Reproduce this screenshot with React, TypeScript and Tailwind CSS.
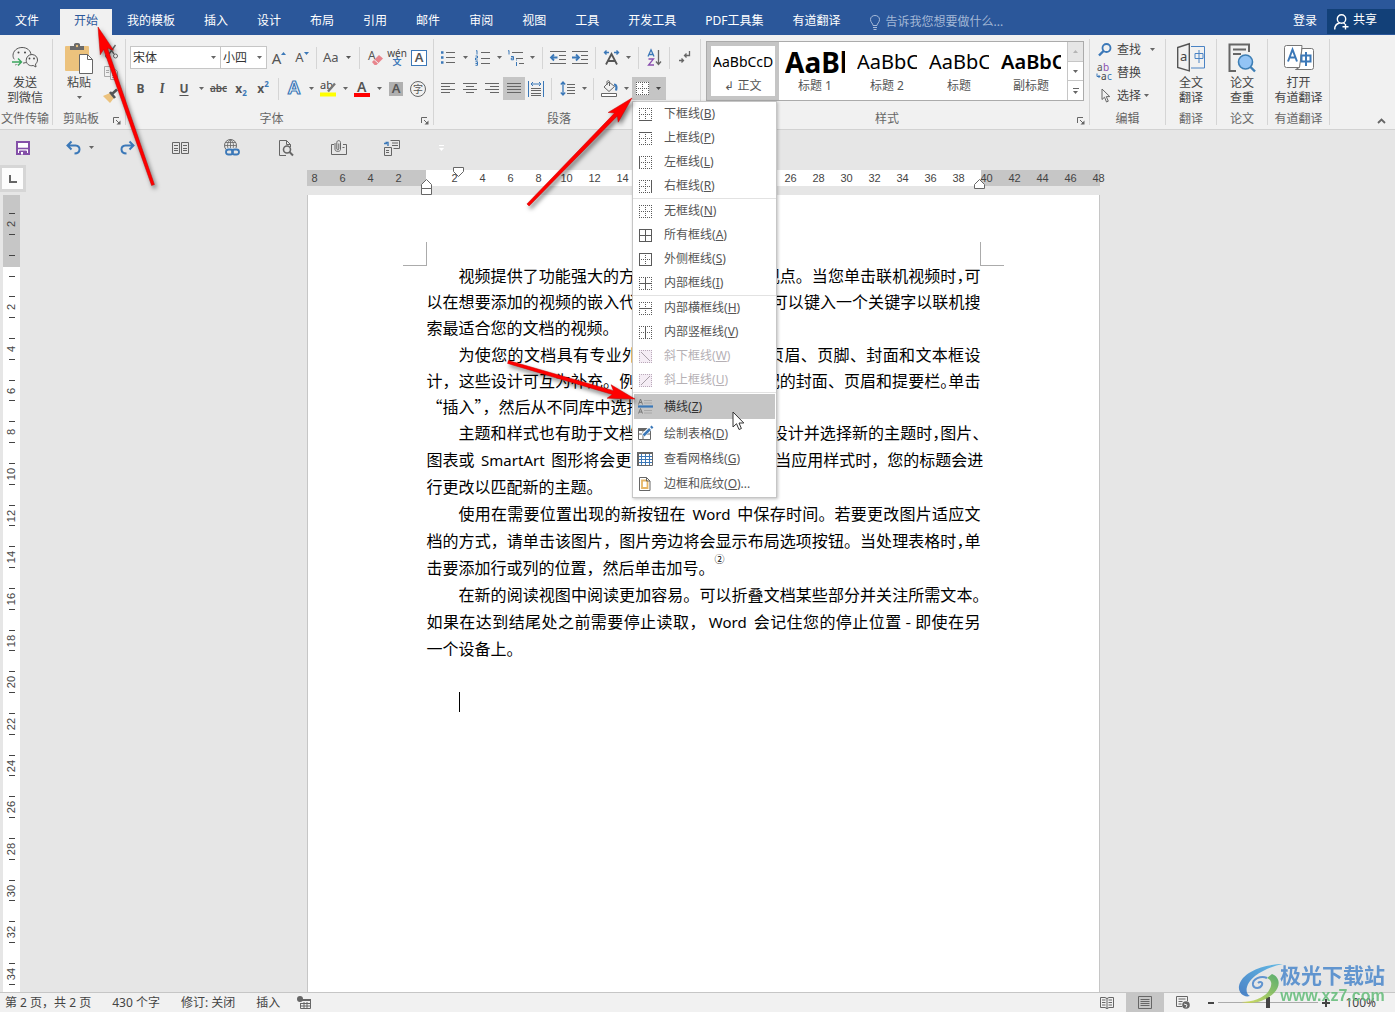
import { useState, type ReactNode } from 'react';
import clsx from 'clsx';
import { twMerge } from 'tailwind-merge';

const GRAY = '#666666';
const BLUE = '#3b78b8';

const TABS = [
  '文件', '开始', '我的模板', '插入', '设计', '布局', '引用', '邮件',
  '审阅', '视图', '工具', '开发工具', 'PDF工具集', '有道翻译',
];

type Side = 't' | 'b' | 'l' | 'r' | 'h' | 'v';

interface MenuEntry {
  label: string;
  accel: string;
  icon: ReactNode;
  tail?: string;
  disabled?: boolean;
  active?: boolean;
}

interface Line {
  text: string;
  fill?: boolean;
  // number of trailing punctuation marks set at half width
  tight?: number;
  note?: string;
}

const PARAGRAPHS: { leading: string; lines: Line[] }[] = [
  {
    leading: 'leading-[26px] mb-px',
    lines: [
      { text: '视频提供了功能强大的方法帮助您证明您的观点。当您单击联机视频时，可', fill: true, tight: 1 },
      { text: '以在想要添加的视频的嵌入代码中进行粘贴。您也可以键入一个关键字以联机搜', fill: true, tight: 1 },
      { text: '索最适合您的文档的视频。' },
    ],
  },
  {
    leading: 'leading-[26px]',
    lines: [
      { text: '为使您的文档具有专业外观，Word 提供了页眉、页脚、封面和文本框设', fill: true },
      { text: '计，这些设计可互为补充。例如，您可以添加匹配的封面、页眉和提要栏。单击', fill: true, tight: 1 },
      { text: '“插入”，然后从不同库中选择所需元素。' },
    ],
  },
  {
    leading: 'leading-[27px]',
    lines: [
      { text: '主题和样式也有助于文档保持协调。当您单击设计并选择新的主题时，图片、', fill: true, tight: 3 },
      { text: '图表或 SmartArt 图形将会更改以匹配新的主题。当应用样式时，您的标题会进', fill: true },
      { text: '行更改以匹配新的主题。' },
    ],
  },
  {
    leading: 'leading-[27px]',
    lines: [
      { text: '使用在需要位置出现的新按钮在 Word 中保存时间。若要更改图片适应文', fill: true },
      { text: '档的方式，请单击该图片，图片旁边将会显示布局选项按钮。当处理表格时，单', fill: true, tight: 1 },
      { text: '击要添加行或列的位置，然后单击加号。', note: '②' },
    ],
  },
  {
    leading: 'leading-[27px]',
    lines: [
      { text: '在新的阅读视图中阅读更加容易。可以折叠文档某些部分并关注所需文本。', fill: true, tight: 1 },
      { text: '如果在达到结尾处之前需要停止读取，Word 会记住您的停止位置 - 即使在另', fill: true },
      { text: '一个设备上。' },
    ],
  },
];

/* ---------- small building blocks ---------- */

function Svg({ w, h, children, className }: { w: number; h: number; children: ReactNode; className?: string }) {
  return (
    <svg
      width={w}
      height={h}
      viewBox={`0 0 ${w} ${h}`}
      fill="none"
      stroke={GRAY}
      className={clsx('shrink-0 overflow-visible', className)}
      aria-hidden
    >
      {children}
    </svg>
  );
}

function Caret({ className }: { className?: string }) {
  return (
    <Svg w={5} h={3} className={className}>
      <path d="M0 0h5L2.5 3z" fill="currentColor" stroke="none" />
    </Svg>
  );
}

function Tool({ label, className, children }: { label: string; className?: string; children: ReactNode }) {
  return (
    <button
      type="button"
      aria-label={label}
      className={twMerge('flex h-[23px] w-[22px] shrink-0 items-center justify-center leading-none', className)}
    >
      {children}
    </button>
  );
}

function Drop({ label }: { label: string }) {
  return (
    <button type="button" aria-label={label} className="flex h-[23px] w-3 shrink-0 items-center justify-center text-[#666]">
      <Caret />
    </button>
  );
}

function Sep({ className }: { className?: string }) {
  return <span className={clsx('h-[22px] w-px shrink-0 bg-[#d5d5d5]', className)} />;
}

function Group({ name, launcher, className, children }: {
  name: string;
  launcher?: boolean;
  className: string;
  children: ReactNode;
}) {
  return (
    <section aria-label={name} className={clsx('flex shrink-0 flex-col', className)}>
      <div className="h-[75px]">{children}</div>
      <div className="flex h-[17px] items-center text-[#666]">
        <span className="flex-1 text-center leading-4 whitespace-nowrap">{name}</span>
        {launcher && (
          <button type="button" aria-label={`${name}设置`} className="flex w-4 justify-center pt-1">
            <Svg w={8} h={8}>
              <path d="M.5 6V.5H6M3 3l3 3" />
              <path d="M7.5 3.5v4h-4z" fill={GRAY} stroke="none" />
            </Svg>
          </button>
        )}
      </div>
    </section>
  );
}

function GroupRule() {
  return <span className="mt-1 h-[86px] w-px shrink-0 bg-[#d5d5d5]" />;
}

function BigButton({ icon, lines }: { icon: ReactNode; lines: string[] }) {
  return (
    <button type="button" className="flex w-full flex-col items-center pt-2 text-[#444]">
      <span className="flex h-[32px] items-start">{icon}</span>
      {lines.map((l) => (
        <span key={l} className="leading-[15px] whitespace-nowrap">{l}</span>
      ))}
    </button>
  );
}

/* ---------- icons ---------- */

function BorderIcon({ on = '', diag, size = 13 }: { on?: string; diag?: 'down' | 'up'; size?: number }) {
  const e = size - 0.5;
  const m = size / 2;
  const segs: [Side, string][] = [
    ['t', `M0 .5H${size}`],
    ['b', `M0 ${e}H${size}`],
    ['l', `M.5 0V${size}`],
    ['r', `M${e} 0V${size}`],
    ['h', `M0 ${m}H${size}`],
    ['v', `M${m} 0V${size}`],
  ];
  const c = diag ? '#b9a9b9' : '#5a5a5a';
  return (
    <Svg w={size} h={size}>
      {diag && <rect width={size} height={size} fill="#f5edf5" stroke="none" />}
      {segs
        .filter(([s]) => !diag || (s !== 'h' && s !== 'v'))
        .map(([s, d]) => (
          <path key={s} d={d} stroke={c} strokeDasharray={on.includes(s) ? undefined : '1 1'} />
        ))}
      {diag && <path d={diag === 'down' ? 'M2 2l9 9' : 'M2 11l9-9'} stroke="#a9a0a9" />}
    </Svg>
  );
}

function LinesIcon({ widths, anchor }: { widths: number[]; anchor: 'l' | 'c' | 'r' }) {
  return (
    <Svg w={14} h={13}>
      {widths.map((w, i) => {
        const x = anchor === 'l' ? 0 : anchor === 'c' ? (14 - w) / 2 : 14 - w;
        return <path key={i} d={`M${x} ${i * 3 + 1.5}h${w}`} />;
      })}
    </Svg>
  );
}

const wechatIcon = (
  <Svg w={26} h={24} className="mt-[2px]">
    <path d="M4.500 16.500l-1 3.500 4-2.200c6 1.500 11.500-2 11.500-7.500C19 5.500 15 2.500 10 2.500S1 6 1 10.500c0 1.500.5 3 1.500 4" stroke="#555" />
    <path d="M20 9.500c3.500.3 5.500 2.500 5.500 5.500 0 1.700-.8 3-2 4l.5 3-2.800-1.500c-4 1-7-1.700-7-5.200 0-3.300 2.600-5.800 5.800-5.800z" fill="#f1f1f1" stroke="#555" />
    <circle cx="6.500" cy="7.500" r="1" fill="#444" stroke="none" />
    <circle cx="13" cy="7.500" r="1" fill="#444" stroke="none" />
    <circle cx="17.500" cy="13.500" r=".9" fill="#444" stroke="none" />
    <circle cx="22" cy="13.500" r=".9" fill="#444" stroke="none" />
    <rect x="0" y="14.500" width="11" height="5" fill="#f1f1f1" stroke="none" />
    <path d="M0 17h9M6 13.500L9.500 17 6 20.500" stroke="#3ba55d" strokeWidth="1.400" />
  </Svg>
);

const pasteIcon = (
  <Svg w={28} h={31}>
    <rect x="0" y="3" width="24" height="25" rx="1" fill="#ecc27d" stroke="none" />
    <path d="M5 7V3h4V1.500C9 .5 10 0 12 0s3 .5 3 1.500V3h4v4z" fill="#6a6a6a" stroke="none" />
    <circle cx="12" cy="3" r="1.200" fill="#ecc27d" stroke="none" />
    <path d="M14.500 11.500h8l5 5v14h-13z" fill="#fff" />
    <path d="M22.500 11.500v5h5" />
  </Svg>
);

const fullTextIcon = (
  <Svg w={28} h={29}>
    <path d="M.7 4.500L12.300.8v27L.7 24.500z" stroke="#555" strokeWidth="1.400" />
    <path d="M14 3.500h13.500v21.500H14" stroke="#4a83c4" />
    <path d="M18 10.500h8v5h-8zM22 7v13" stroke="#4a83c4" />
    <text x="3" y="18" fontSize="13" fill="#444" stroke="none">a</text>
  </Svg>
);

const paperIcon = (
  <Svg w={28} h={30}>
    <path d="M21 9V1.500H1.500v26.500H8" stroke="#666" strokeWidth="2" />
    <path d="M5 6.500h13M5 11h8" stroke="#666" strokeWidth="2" />
    <circle cx="17.500" cy="19" r="7" fill="#93c4f5" stroke="#3e7fb5" strokeWidth="1.600" />
    <path d="M22.500 24l4.500 4.500" stroke="#3e7fb5" strokeWidth="2.400" />
  </Svg>
);

const youdaoIcon = (
  <Svg w={30} h={29}>
    <path d="M16 24.500H2.500a2 2 0 0 1-2-2v-18a2 2 0 0 1 2-2h15.500l-2 22z" fill="#fff" stroke="#777" />
    <path d="M18 5.500h9.500a2 2 0 0 1 2 2v17a2 2 0 0 1-2 2h-16l4-2z" fill="#fff" stroke="#777" />
    <path d="M4 18.500L8.500 6.500 13 18.500M5.500 14.500h6" stroke={BLUE} strokeWidth="2" />
    <path d="M17.500 12.500h9v6h-9zM22 9v14" stroke={BLUE} strokeWidth="2" />
  </Svg>
);

const lineRuleIcon = (
  <Svg w={15} h={15}>
    <path d="M.5 5.500L2.500 0 4.500 5.500M1 3.500h3M.5 14.500L2.500 9.500 4.500 14.500M1 13h3" stroke="#777" />
    <path d="M6 1.500h8M6 4h8M6 11.500h8M6 14h8" stroke="#a8a8a8" />
    <path d="M0 7.500h15" stroke={BLUE} strokeWidth="2.200" />
  </Svg>
);

const drawTableIcon = (
  <Svg w={15} h={15}>
    <path d="M.5 2.500h12v11H.5zM.5 8h12M5 5v8" />
    <path d="M0 3.500h11" strokeWidth="3" />
    <path d="M5 9.500L13 1.500" stroke="#fff" strokeWidth="4" />
    <path d="M5.500 9.500L12 3M13 2l1.500-1.500" stroke={BLUE} strokeWidth="2.600" />
  </Svg>
);

const gridLinesIcon = (
  <Svg w={16} h={14}>
    <path d="M.5.5h15v13H.5z" fill="#fff" />
    <path d="M4.500 1v12M8.500 1v12M12.500 1v12M2 4.500h13M2 7.500h13M2 10.500h13" stroke={BLUE} />
    <path d="M0 1h16M1 0v14" strokeWidth="2" />
  </Svg>
);

const shadingPageIcon = (
  <Svg w={12} h={14}>
    <path d="M.5.5h7l3.500 3.500v9.500H.5z" fill="#fff" />
    <path d="M3 3.500h4.500l1 1V11H3z" stroke="#e6b566" strokeWidth="1.800" />
    <path d="M7.500.5V4H11" />
  </Svg>
);

/* ---------- borders menu ---------- */

const MENU: MenuEntry[][] = [
  [
    { label: '下框线', accel: 'B', icon: <BorderIcon on="b" /> },
    { label: '上框线', accel: 'P', icon: <BorderIcon on="t" /> },
    { label: '左框线', accel: 'L', icon: <BorderIcon on="l" /> },
    { label: '右框线', accel: 'R', icon: <BorderIcon on="r" /> },
  ],
  [
    { label: '无框线', accel: 'N', icon: <BorderIcon /> },
    { label: '所有框线', accel: 'A', icon: <BorderIcon on="tblrhv" /> },
    { label: '外侧框线', accel: 'S', icon: <BorderIcon on="tblr" /> },
    { label: '内部框线', accel: 'I', icon: <BorderIcon on="hv" /> },
  ],
  [
    { label: '内部横框线', accel: 'H', icon: <BorderIcon on="h" /> },
    { label: '内部竖框线', accel: 'V', icon: <BorderIcon on="v" /> },
    { label: '斜下框线', accel: 'W', icon: <BorderIcon diag="down" />, disabled: true },
    { label: '斜上框线', accel: 'U', icon: <BorderIcon diag="up" />, disabled: true },
  ],
  [
    { label: '横线', accel: 'Z', icon: lineRuleIcon, active: true },
    { label: '绘制表格', accel: 'D', icon: drawTableIcon },
    { label: '查看网格线', accel: 'G', icon: gridLinesIcon },
    { label: '边框和底纹', accel: 'O', icon: shadingPageIcon, tail: '...' },
  ],
];

function BordersMenu() {
  return (
    <div
      role="menu"
      className="absolute top-full left-0 z-20 mt-px w-[145px] border border-[#c6c6c6] bg-white text-[#555] shadow-[1px_1px_3px_rgba(0,0,0,0.25)]"
    >
      {MENU.map((section, s) => (
        <div key={s} className={clsx('px-px', s > 0 && 'border-t border-[#e2e2e2]', s === 3 && 'pt-px pb-px')}>
          {section.map((m) => (
            <button
              key={m.accel}
              type="button"
              role="menuitem"
              disabled={m.disabled}
              className={clsx(
                'flex w-full items-center',
                s === 3 ? 'h-[25px]' : 'h-6',
                m.active && 'mb-[2px] bg-[#c5c5c5] text-[#333]',
                m.disabled && 'text-[#b5b0b5]',
              )}
            >
              <span className="flex w-[22px] shrink-0 justify-center">{m.icon}</span>
              <span className="pl-2 leading-5 whitespace-nowrap">
                {m.label}(<u className="underline-offset-1">{m.accel}</u>){m.tail}
              </span>
            </button>
          ))}
        </div>
      ))}
      <Svg w={13} h={20} className="absolute top-[309px] left-[99px]">
        <path d="M1 1v15l3.500-3.300L7 18.500l2.400-1L7 12h4.800z" fill="#fff" stroke="#333" />
      </Svg>
    </div>
  );
}

/* ---------- ribbon groups ---------- */

function Combo({ label, value, className }: { label: string; value: string; className: string }) {
  return (
    <label className={clsx('grid h-[23px] shrink-0 items-center border border-[#c6c6c6] bg-white text-[#666]', className)}>
      <select
        aria-label={label}
        defaultValue={value}
        className="col-start-1 row-start-1 h-[21px] w-full appearance-none bg-transparent pl-[2px] leading-5 text-[#333] outline-none"
      >
        <option>{value}</option>
      </select>
      <Caret className="pointer-events-none col-start-1 row-start-1 mr-1 justify-self-end" />
    </label>
  );
}

function FontGroup() {
  return (
    <div className="pt-[11px] pl-1 text-[#555]">
      <div className="flex h-[23px] items-center">
        <Combo label="字体" value="宋体" className="w-[91px]" />
        <Combo label="字号" value="小四" className="-ml-px w-[47px]" />
        <Tool label="增大字号" className="w-6 text-[15px]">
          A<Svg w={5} h={3} className="mb-2"><path d="M0 3h5L2.500 0z" fill={BLUE} stroke="none" /></Svg>
        </Tool>
        <Tool label="减小字号" className="text-[13px]">
          A<Svg w={5} h={3} className="mb-2"><path d="M0 0h5L2.500 3z" fill={BLUE} stroke="none" /></Svg>
        </Tool>
        <Sep className="mr-[6px] ml-[3px]" />
        <button type="button" aria-label="更改大小写" className="flex w-[28px] items-center justify-between text-[13px] leading-none">
          Aa <Caret />
        </button>
        <Sep className="mr-1 ml-2" />
        <Tool label="清除所有格式">
          <Svg w={15} h={16}>
            <text x="0" y="10" fontSize="12" fill="#555" stroke="none">A</text>
            <path d="M4 12l7-7 4 3.500-6.500 6.500H6.500z" fill="#e8848c" stroke="none" />
            <path d="M6 9.500l4.500 4" stroke="#f1f1f1" />
          </Svg>
        </Tool>
        <Tool label="拼音指南" className="flex-col text-[#444]">
          <span className="text-[10px] leading-[8px]">wén</span>
          <span className="text-[9px] leading-[9px] font-bold text-[#3b78b8]">文</span>
        </Tool>
        <Tool label="字符边框">
          <span className="flex h-4 w-4 items-center justify-center border border-[#3b78b8] bg-white text-[13px] leading-none font-semibold">A</span>
        </Tool>
      </div>
      <div className="mt-2 flex h-[23px] items-center">
        <Tool label="加粗" className="w-[21px] font-bold">B</Tool>
        <Tool label="倾斜" className="font-serif text-[13px] font-bold italic">I</Tool>
        <Tool label="下划线" className="font-bold underline underline-offset-2">U</Tool>
        <Drop label="下划线样式" />
        <Tool label="删除线" className="w-[23px] text-[10px] font-semibold line-through">abc</Tool>
        <Tool label="下标" className="items-center font-bold">
          x<span className="self-end pb-[3px] text-[8px] text-[#3b78b8]">2</span>
        </Tool>
        <Tool label="上标" className="font-bold">
          x<span className="self-start pt-[3px] text-[8px] text-[#3b78b8]">2</span>
        </Tool>
        <Sep className="mx-1" />
        <Tool label="文本效果">
          <Svg w={15} h={15}>
            <text x="1" y="13" fontSize="18" fontWeight="600" fill="#fff" stroke={BLUE} strokeWidth="1.200">A</text>
          </Svg>
        </Tool>
        <Drop label="文本效果选项" />
        <Tool label="突出显示">
          <Svg w={17} h={16}>
            <text x="0" y="8" fontSize="11" fill="#444" stroke="none">ab</text>
            <path d="M8 10.500l7-8" stroke="#777" strokeWidth="2.400" />
            <path d="M0 13.500h16" stroke="#ffff00" strokeWidth="4" />
          </Svg>
        </Tool>
        <Drop label="突出显示颜色" />
        <Tool label="字体颜色">
          <Svg w={16} h={16}>
            <text x="3" y="11" fontSize="14" fontWeight="600" fill="#555" stroke="none">A</text>
            <path d="M0 14h16" stroke="#ff0000" strokeWidth="4" />
          </Svg>
        </Tool>
        <Drop label="字体颜色选项" />
        <Tool label="字符底纹">
          <span className="flex h-[14px] w-[14px] items-center justify-center bg-[#b0b0b0] text-[13px] leading-none font-semibold">A</span>
        </Tool>
        <Tool label="带圈字符">
          <span className="flex h-4 w-4 items-center justify-center rounded-full border border-[#666] text-[10px] leading-none">字</span>
        </Tool>
      </div>
    </div>
  );
}

function ParagraphGroup() {
  const [open, setOpen] = useState(true);
  return (
    <div className="pt-[11px] pl-[3px]">
      <div className="flex h-[23px] items-center">
        <Tool label="项目符号">
          <Svg w={14} h={15}>
            <path d="M5 2.500h9M5 7.500h9M5 12.500h9" />
            <path d="M0 2.500h2.500M0 7.500h2.500M0 12.500h2.500" stroke={BLUE} strokeWidth="2.500" />
          </Svg>
        </Tool>
        <Drop label="项目符号库" />
        <Tool label="编号">
          <Svg w={15} h={16}>
            <path d="M6 2.500h9M6 8.500h9M6 13.500h9" />
            <path d="M1 1l1-.5V4.500M.5 6h2v2h-2v2h2.300M.5 11.700h2v3.600h-2M.5 13.500h2" stroke={BLUE} />
          </Svg>
        </Tool>
        <Drop label="编号库" />
        <Tool label="多级列表" className="w-[21px]">
          <Svg w={17} h={16}>
            <path d="M5 2.500h11M9 8.500h7M12 13.500h5" />
            <path d="M1 1l1-.5V4.500M4 6.500h2.500v3.300H4.300V8h2.200M9.500 12v4M9.500 9.500v1" stroke={BLUE} />
          </Svg>
        </Tool>
        <Drop label="多级列表选项" />
        <Sep className="mr-1 ml-1" />
        <Tool label="减少缩进量">
          <Svg w={16} h={13}>
            <path d="M0 .5h16M9 4.500h7M9 8.500h7M0 12.500h16" />
            <path d="M7.500 6.500H1.500M4 3.500L1 6.500l3 3" stroke={BLUE} strokeWidth="1.800" />
          </Svg>
        </Tool>
        <Tool label="增加缩进量">
          <Svg w={16} h={13}>
            <path d="M0 .5h16M9 4.500h7M9 8.500h7M0 12.500h16" />
            <path d="M0 6.500h6M4 3.500l3 3-3 3" stroke={BLUE} strokeWidth="1.800" />
          </Svg>
        </Tool>
        <Sep className="mx-1" />
        <Tool label="中文版式">
          <Svg w={17} h={15}>
            <path d="M3 14.500L8.500 4l5.500 10.500M5 11h7" stroke="#555" strokeWidth="1.800" />
            <path d="M6 2.500H1.500M3.500.5l-2 2 2 2M11 2.500h4.500M13.500.5l2 2-2 2" stroke={BLUE} strokeWidth="1.400" />
          </Svg>
        </Tool>
        <Drop label="中文版式选项" />
        <Sep className="mr-1 ml-1" />
        <Tool label="排序">
          <Svg w={15} h={17}>
            <path d="M1 7.500L4 .8l3 6.700M2 5.500h4" stroke={BLUE} strokeWidth="1.300" />
            <path d="M1.500 10h5l-5 6h5.500" stroke="#8a4fb0" strokeWidth="1.300" />
            <path d="M11.500 1v14M9 12.500l2.500 3 2.500-3" strokeWidth="1.300" />
          </Svg>
        </Tool>
        <Sep className="mx-1" />
        <Tool label="显示编辑标记">
          <Svg w={12} h={13}>
            <path d="M10.500 0v4.500H5.500M7.500 2.500l-2 2 2 2M0 9.500h4.500M2.500 7.500l2 2-2 2" strokeWidth="1.300" />
          </Svg>
        </Tool>
      </div>
      <div className="mt-2 flex h-[23px] items-center">
        <Tool label="左对齐"><LinesIcon widths={[14, 9, 14, 9]} anchor="l" /></Tool>
        <Tool label="居中"><LinesIcon widths={[14, 8, 14, 8]} anchor="c" /></Tool>
        <Tool label="右对齐"><LinesIcon widths={[14, 9, 14, 9]} anchor="r" /></Tool>
        <Tool label="两端对齐" className="bg-[#c5c5c5]"><LinesIcon widths={[14, 14, 14, 14]} anchor="l" /></Tool>
        <Tool label="分散对齐">
          <Svg w={16} h={16}>
            <path d="M.5 0v16M15.500 0v16M3 3h10M5 1L3 3l2 2M11 1l2 2-2 2" stroke={BLUE} />
            <path d="M3 7.500h10M3 9.500h10M3 12.500h10M3 14.500h10" />
          </Svg>
        </Tool>
        <Sep className="mx-1" />
        <Tool label="行距">
          <Svg w={15} h={15}>
            <path d="M3 1v13M.8 3.500L3 1l2.200 2.500M.8 11.500L3 14l2.200-2.500" stroke={BLUE} strokeWidth="1.300" />
            <path d="M7 3.500h8M7 6.500h8M7 9.500h8M7 12.500h8" />
          </Svg>
        </Tool>
        <Drop label="行距选项" />
        <Sep className="mr-1 ml-[3px]" />
        <Tool label="底纹">
          <Svg w={17} h={17}>
            <path d="M3 7l5-5 5.500 4.500L8 11.500zM6 5V1.500c0-1 2.500-1 2.500 0V6" />
            <path d="M13 4.500c2.500 0 3 2.500 2 6" stroke={BLUE} strokeWidth="2.200" />
            <path d="M.5 13.500h15v3H.5z" fill="#fff" />
          </Svg>
        </Tool>
        <Drop label="底纹颜色" />
        <div className="relative">
          <button
            type="button"
            aria-label="边框"
            aria-expanded={open}
            onClick={() => setOpen(!open)}
            className="flex h-[23px] w-[34px] items-center justify-between bg-[#c5c5c5] pr-[5px] pl-1"
          >
            <span className="bg-white"><BorderIcon /></span>
            <Caret />
          </button>
          {open && <BordersMenu />}
        </div>
      </div>
    </div>
  );
}

const STYLES = [
  { name: '↲ 正文', sample: 'AaBbCcDd', look: 'text-sm', picked: true },
  { name: '标题 1', sample: 'AaBb', look: 'text-[28px] font-bold' },
  { name: '标题 2', sample: 'AaBbC', look: 'text-xl' },
  { name: '标题', sample: 'AaBbC', look: 'text-xl' },
  { name: '副标题', sample: 'AaBbC', look: 'text-xl font-semibold' },
];

function StylesGroup() {
  return (
    <div className="pt-[6px] pl-[5px]">
      <div className="flex h-[60px] w-[378px] border border-[#ababab] bg-white text-[#666]">
        {STYLES.map((s) => (
          <button
            key={s.name}
            type="button"
            className={clsx(
              'flex w-[72px] shrink-0 flex-col border-4 px-[2px]',
              s.picked ? 'border-[#c5c5c5]' : 'border-white',
            )}
          >
            <span className={clsx('flex w-full items-center overflow-hidden text-black', s.look, 'leading-[32px]')}>
              {s.sample}
            </span>
            <span className="w-full text-center leading-4 text-[#555]">{s.name}</span>
          </button>
        ))}
        <div className="flex flex-1 flex-col divide-y divide-[#c6c6c6] border-l border-[#c6c6c6]">
          <button type="button" aria-label="上一行" className="flex flex-1 items-center justify-center bg-[#e6e6e6] text-[#b5b5b5]">
            <Caret className="rotate-180" />
          </button>
          <button type="button" aria-label="下一行" className="flex flex-1 items-center justify-center"><Caret /></button>
          <button type="button" aria-label="其他样式" className="flex flex-1 flex-col items-center justify-center gap-[2px]">
            <span className="h-px w-[6px] bg-[#666]" />
            <Caret />
          </button>
        </div>
      </div>
    </div>
  );
}

function EditGroup() {
  return (
    <div className="flex flex-col pt-[3px] pl-[6px] text-[#444]">
      <button type="button" className="flex h-[23px] items-center">
        <span className="flex w-[21px] pl-[2px]">
          <Svg w={14} h={13}>
            <circle cx="8.500" cy="5" r="4" stroke={BLUE} strokeWidth="1.800" />
            <path d="M5.500 8L1 12.500" stroke={BLUE} strokeWidth="2.400" />
          </Svg>
        </span>
        <span className="w-[33px] text-left">查找</span>
        <Caret className="text-[#666]" />
      </button>
      <button type="button" className="flex h-[23px] items-center">
        <span className="flex w-[21px]">
          <Svg w={17} h={17}>
            <text x="1" y="7" fontSize="10" fill="#555" stroke="none">a</text>
            <text x="7" y="7" fontSize="10" fill="#8a4fb0" stroke="none">b</text>
            <text x="5" y="16" fontSize="10" fill="#444" stroke="none">a</text>
            <text x="11" y="16" fontSize="10" fill={BLUE} stroke="none">c</text>
            <path d="M1 9.500v3h3M2.500 11l1.500 1.500L2.500 14" stroke={BLUE} />
          </Svg>
        </span>
        替换
      </button>
      <button type="button" className="flex h-[23px] items-center">
        <span className="flex w-[21px] pl-[5px]">
          <Svg w={10} h={15}>
            <path d="M1 1v10.500l2.500-2.300 2 4.800 1.800-.8-2-4.600h3.500z" />
          </Svg>
        </span>
        <span className="w-[27px] text-left">选择</span>
        <Caret className="text-[#666]" />
      </button>
    </div>
  );
}

function ClipboardGroup() {
  return (
    <div className="flex pt-2 pl-3">
      <button type="button" className="flex w-[28px] flex-col items-center text-[#444]">
        <span className="flex h-[32px]">{pasteIcon}</span>
        <span className="leading-[15px]">粘贴</span>
        <Caret className="mt-[6px] text-[#666]" />
      </button>
      <div className="flex flex-col pl-[7px]">
        <Tool label="剪切" className="h-[18px]">
          <Svg w={14} h={14}>
            <path d="M11.500 0L5 9M4 0l6 9" strokeWidth="1.400" />
            <circle cx="3.500" cy="11" r="2" />
            <circle cx="11.500" cy="11" r="2" />
          </Svg>
        </Tool>
        <Tool label="复制">
          <Svg w={14} h={14}>
            <path d="M.5.5h5l2 2v8h-7zM2 4.500h3M2 6.500h3" stroke="#aaa" />
            <path d="M6.500 3.500h5l2 2v8h-7z" fill="#f8f5fa" stroke="#aaa" />
            <path d="M8 7.500h4M8 9.500h4M8 11.500h4" stroke="#aaa" />
          </Svg>
        </Tool>
        <Tool label="格式刷">
          <Svg w={16} h={14}>
            <path d="M0 7l7-3 4 5-4 5z" fill="#ecc27d" stroke="none" />
            <path d="M7 3l5 6M9 5l5-4.500" stroke="#555" strokeWidth="2.600" />
          </Svg>
        </Tool>
      </div>
    </div>
  );
}

/* ---------- quick access bar ---------- */

function QuickBar() {
  return (
    <div className="flex h-[35px] items-center text-[#666]">
      <Tool label="保存" className="w-[46px]">
        <Svg w={14} h={14}>
          <path d="M1 1h12v12H1z" stroke="#8450a8" strokeWidth="2" fill="#fff" />
          <path d="M1 7.500h12" stroke="#8450a8" strokeWidth="1.600" />
          <path d="M3.500 14v-4h7v4" fill="#8450a8" stroke="#8450a8" />
          <path d="M6 11v2.500" stroke="#fff" strokeWidth="2" />
        </Svg>
      </Tool>
      <Tool label="撤消" className="ml-[13px] w-[28px]">
        <Svg w={15} h={13}>
          <path d="M2 4.500h7.500c5.500.5 5.500 8-1 8M5.500.5l-4 4 4 4" stroke={BLUE} strokeWidth="2" />
        </Svg>
      </Tool>
      <button type="button" aria-label="撤消列表" className="flex w-2 justify-center"><Caret /></button>
      <Tool label="重复" className="ml-1 w-14">
        <Svg w={15} h={13}>
          <path d="M13 4.500H5.500c-5.500.5-5.500 8 1 8M9.500.5l4 4-4 4" stroke={BLUE} strokeWidth="2" />
        </Svg>
      </Tool>
      <Tool label="多页" className="w-[50px]">
        <Svg w={17} h={12}>
          <path d="M.5.5h7v11h-7zM9.500.5h7v11h-7zM2 3.500h4M2 6.500h4M2 8.500h4M11 3.500h4M11 6.500h4M11 8.500h4" />
        </Svg>
      </Tool>
      <Tool label="超链接" className="w-[54px]">
        <Svg w={16} h={17}>
          <circle cx="6.500" cy="6.500" r="6" />
          <path d="M.5 6.500h12M6.500.5v12M2 3.500h9M2 9.500h9M6.500.5c-4 3-4 9 0 12M6.500.5c4 3 4 9 0 12" strokeWidth=".8" />
          <path d="M2 9h14v8H2z" fill="#e6e6e6" stroke="none" />
          <rect x="2" y="10.500" width="7" height="5" rx="2.500" stroke={BLUE} strokeWidth="1.800" />
          <rect x="8" y="10.500" width="7" height="5" rx="2.500" stroke={BLUE} strokeWidth="1.800" />
        </Svg>
      </Tool>
      <Tool label="打印预览" className="w-[54px]">
        <Svg w={15} h={16}>
          <path d="M7 15.500H.5V.5h7l4 4V7M7.500.5v4h4" />
          <circle cx="8" cy="9.500" r="3.500" strokeWidth="1.600" />
          <path d="M10.500 12l3.500 3.500" strokeWidth="2" />
        </Svg>
      </Tool>
      <Tool label="附件" className="w-[52px]">
        <Svg w={17} h={15}>
          <path d="M3 4.500H.5v10h15v-10H12M11.500 7.500h2" />
          <path d="M4 3v6.500c0 2.500 5.500 2.500 5.500 0V2.500c0-2.500-3.700-2.500-3.700 0V9c0 1 2 1 2 0V3.500" />
        </Svg>
      </Tool>
      <Tool label="新建批注" className="w-[53px]">
        <Svg w={17} h={16}>
          <path d="M1.500 7.500h7v8h-7zM3 10.500h3M3 12.500h3M7.500.5h9v8h-6M9 3h6M9 5.500h6" />
          <path d="M5 6V2.500H2.500M1 3.500h3" stroke={BLUE} strokeWidth="1.400" />
        </Svg>
      </Tool>
      <button type="button" aria-label="自定义快速访问工具栏" className="flex w-[46px] flex-col items-center gap-[2px] text-white">
        <span className="h-px w-[5px] bg-white" />
        <Caret />
      </button>
    </div>
  );
}

/* ---------- rulers ---------- */

const H_MARKS = ['6', '4', '2', '', ...Array.from({ length: 24 }, (_, i) => String(i * 2 + 2))];

function HorizontalRuler() {
  return (
    <div className="relative mx-auto grid h-4 w-[793px] grid-cols-[minmax(0,1fr)] text-[11px] leading-4 text-[#444]">
      <div className="col-start-1 row-start-1 flex bg-white">
        <span className="mr-auto w-[119px] bg-[#c6c6c6]" />
        <span className="w-[119px] bg-[#c6c6c6]" />
      </div>
      <div className="col-start-1 row-start-1 flex text-center font-['Liberation_Sans',sans-serif]">
        <span className="w-[22px] shrink-0 pr-[6px]">8</span>
        {H_MARKS.map((m, i) => (
          <span key={i} className="w-7 shrink-0">{m}</span>
        ))}
      </div>
      <Svg w={11} h={10} className="absolute -top-[3px] left-[146px]">
        <path d="M.5.500h10v4l-5 5-5-5z" fill="#fff" />
      </Svg>
      <Svg w={11} h={16} className="absolute top-[9px] left-[114px]">
        <path d="M.5 9.500v-4l5-5 5 5v4zM.5 9.500h10v6H.5z" fill="#fff" />
      </Svg>
      <Svg w={11} h={10} className="absolute top-[9px] left-[667px]">
        <path d="M.5 9.500v-4l5-5 5 5v4z" fill="#fff" />
      </Svg>
    </div>
  );
}

function Tick() {
  return <span className="h-px w-[6px] bg-[#444]" />;
}

function RulerCell({ n, short }: { n: number; short?: boolean }) {
  return (
    <div className={clsx('flex shrink-0 flex-col items-center justify-between py-[10px]', short ? 'h-[41px]' : 'h-[42px]')}>
      <Tick />
      <span className="-rotate-90 leading-3">{n}</span>
      <Tick />
    </div>
  );
}

function VerticalRuler() {
  return (
    <div className="ml-[3px] flex w-[17px] flex-col overflow-hidden bg-white font-['Liberation_Sans',sans-serif] text-[11px] text-[#444]">
      <div className="flex h-[72px] shrink-0 flex-col items-center bg-[#c6c6c6] pt-2">
        <RulerCell n={2} />
        <span className="flex pt-[10px]"><Tick /></span>
      </div>
      <div className="flex h-[19px] shrink-0 items-center justify-center"><Tick /></div>
      {Array.from({ length: 17 }, (_, i) => (
        <RulerCell key={i} n={i * 2 + 2} short={i % 3 === 2} />
      ))}
    </div>
  );
}

/* ---------- document ---------- */

// Latin words take the Latin face, the last `tight` marks take half-width forms.
function renderRuns(text: string, tight = 0) {
  const parts = text.split(/([A-Za-z]+|[，。、])/);
  const marks = parts.filter((p) => /^[，。、]$/.test(p)).length;
  let seen = 0;
  return parts.map((p, i) => {
    if (/^[A-Za-z]+$/.test(p)) {
      return <span key={i} className="mx-[3px] font-['Noto_Sans',sans-serif] text-[15px] leading-none">{p}</span>;
    }
    if (/^[，。、]$/.test(p)) {
      seen += 1;
      if (seen > marks - tight) {
        return <span key={i} className="[font-feature-settings:'halt']">{p}</span>;
      }
    }
    return p;
  });
}

function Page() {
  return (
    <article lang="zh-CN" className="mx-auto flex w-[793px] flex-col border-x border-[#c6c6c6] bg-white pt-[47px]">
      <div className="mx-[95px] flex justify-between">
        <span className="h-6 w-6 border-r border-b border-[#ababab]" />
        <span className="h-6 w-6 border-b border-l border-[#ababab]" />
      </div>
      <div className="-mt-1 mr-[118px] ml-[119px] font-['Noto_Sans_CJK_SC',sans-serif] text-base text-black">
        {PARAGRAPHS.map((p, i) => (
          <div key={i} className={p.leading}>
            {p.lines.map((l, j) => (
              <div
                key={j}
                className={clsx('whitespace-nowrap', j === 0 && 'pl-8', l.fill && 'text-justify [text-align-last:justify]')}
              >
                {renderRuns(l.text, l.tight)}
                {l.note && <sup className="align-super text-[10px] leading-none">{l.note}</sup>}
              </div>
            ))}
          </div>
        ))}
        <div className="mt-[30px] ml-8 h-5 w-px bg-black" />
      </div>
    </article>
  );
}

/* ---------- annotations ---------- */

function Arrow({ from, to }: { from: [number, number]; to: [number, number] }) {
  const dx = from[0] - to[0];
  const dy = from[1] - to[1];
  const len = Math.hypot(dx, dy);
  const ux = dx / len;
  const uy = dy / len;
  const at = (along: number, side: number) =>
    `${to[0] + ux * along - uy * side},${to[1] + uy * along + ux * side}`;
  return (
    <polygon
      points={[at(0, 0), at(27, 7), at(23, 2), at(len, 1.5), at(len, -1.5), at(23, -2), at(27, -7)].join(' ')}
      fill="#ff0000"
      stroke="#c00000"
      strokeWidth=".5"
    />
  );
}

function Annotations() {
  return (
    <svg className="pointer-events-none absolute inset-0 z-30 h-full w-full drop-shadow-[2px_3px_2px_rgba(0,0,0,0.5)]" aria-hidden>
      <Arrow from={[153, 185]} to={[98, 27]} />
      <Arrow from={[528, 205]} to={[632, 98]} />
      <Arrow from={[508, 362]} to={[635, 399]} />
    </svg>
  );
}

function Watermark() {
  return (
    <div className="pointer-events-none absolute right-[10px] bottom-[7px] z-10 flex items-start opacity-85">
      <svg width="46" height="42" viewBox="0 0 46 42" className="shrink-0" aria-hidden>
        <defs>
          <linearGradient id="wmBlue" x1="0" y1="1" x2="1" y2="0">
            <stop offset="0" stopColor="#2f6fc0" />
            <stop offset="1" stopColor="#4db4e6" />
          </linearGradient>
          <linearGradient id="wmGreen" x1="0" y1="1" x2="1" y2="0">
            <stop offset="0" stopColor="#d6dc4a" />
            <stop offset="1" stopColor="#3fa35b" />
          </linearGradient>
        </defs>
        <path d="M45 1C28 1 4 8 1 23c-1 6 4 12 11 10C6 30 8 20 17 13 25 7 35 3 45 1z" fill="url(#wmBlue)" />
        <path d="M34 11c8 3 9 12 2 19-8 8-20 12-33 9 12 0 22-4 27-10 5-7 4-12-1-14z" fill="url(#wmGreen)" />
        <path d="M29 15c-6-3-15 1-14 7 1 4 7 4 9 0 1-3-2-4-4-2" fill="none" stroke="#4a86cc" strokeWidth="2" />
      </svg>
      <div className="-ml-1 flex flex-col items-center">
        <span className="text-[21px] leading-[24px] font-bold text-[#4a87cb]">极光下载站</span>
        <span className="font-['Liberation_Sans',sans-serif] text-base leading-[18px] font-bold text-[#62bb78]">www.xz7.com</span>
      </div>
    </div>
  );
}

/* ---------- status bar ---------- */

function StatusBar() {
  const [zoom, setZoom] = useState(50);
  return (
    <footer className="flex h-5 shrink-0 items-center border-t border-[#c6c6c6] bg-[#f1f1f1] pr-[19px] pl-[5px] leading-[19px] whitespace-nowrap text-[#444]">
      <div className="flex gap-[21px]">
        <span>第 2 页，共 2 页</span>
        <span>430 个字</span>
        <span>修订: 关闭</span>
        <span>插入</span>
        <button type="button" aria-label="宏录制" className="-ml-1 flex items-center">
          <Svg w={14} h={13}>
            <path d="M3 3.500h10.500v9h-10V7M4 7.500h9M4 10h9M7 6v6M10 6v6" />
            <path d="M5 4h9" strokeWidth="2" />
            <circle cx="3" cy="3" r="3" fill={GRAY} stroke="none" />
          </Svg>
        </button>
      </div>
      <div className="ml-auto flex h-full items-center">
        <Tool label="阅读视图" className="h-full w-[38px]">
          <Svg w={14} h={13}>
            <path d="M7 2v11M.5 1.500H5L7 2.500l2-1h4.500v10H9l-2 1-2-1H.5zM2 4h3.500M2 6.500h3.500M2 9h3.500M8.500 4H12M8.500 6.500H12M8.500 9H12" />
          </Svg>
        </Tool>
        <Tool label="页面视图" className="h-full w-[38px] bg-[#c6c6c6]">
          <Svg w={14} h={13}>
            <path d="M.5.5h13v12H.5zM2.500 3.500h9M2.500 5.500h9M2.500 7.500h9M2.500 9.500h9" />
          </Svg>
        </Tool>
        <Tool label="Web 版式视图" className="mr-[2px] h-full w-[38px]">
          <Svg w={14} h={13}>
            <path d="M6 10.500H.5v-10h11V5M2.500 3h7M2.500 5.500h4M2.500 8h3" />
            <circle cx="10" cy="9" r="3.800" fill={GRAY} stroke="none" />
            <path d="M8 8l3 1-1 2.500" stroke="#f1f1f1" />
          </Svg>
        </Tool>
        <button type="button" aria-label="缩小" className="flex w-[14px] justify-center">
          <span className="h-[2px] w-[6px] bg-[#444]" />
        </button>
        <input
          type="range"
          aria-label="显示比例"
          value={zoom}
          onChange={(e) => setZoom(Number(e.target.value))}
          className="h-[11px] w-[100px] appearance-none bg-[linear-gradient(#ababab,#ababab)] bg-[length:100%_1px] bg-center bg-no-repeat [&::-webkit-slider-thumb]:h-[11px] [&::-webkit-slider-thumb]:w-1 [&::-webkit-slider-thumb]:appearance-none [&::-webkit-slider-thumb]:bg-[#444]"
        />
        <button type="button" aria-label="放大" className="flex w-[16px] justify-center">
          <Svg w={8} h={8}><path d="M0 4h8M4 0v8" stroke="#444" strokeWidth="2" /></Svg>
        </button>
        <span className="pl-[11px]">100%</span>
      </div>
    </footer>
  );
}

export default function App() {
  const [tab, setTab] = useState('开始');
  return (
    <div className="relative flex h-screen flex-col overflow-hidden bg-[#e6e6e6] font-['Noto_Sans','Noto_Sans_CJK_SC',sans-serif] text-xs text-[#444]">
      <header className="flex h-[35px] shrink-0 items-end bg-[#2b579a] text-white">
        <nav className="flex gap-px pl-px">
          {TABS.map((t, i) => (
            <button
              key={t}
              type="button"
              onClick={() => setTab(t)}
              className={clsx(
                'h-[26px] px-[14px] pb-[2px] whitespace-nowrap',
                i === 0 && 'mr-[6px]',
                t === tab && 'bg-[#f1f1f1] text-[#2b579a]',
              )}
            >
              {t}
            </button>
          ))}
        </nav>
        <label className="ml-4 flex h-[26px] items-center gap-[5px]">
          <Svg w={10} h={15}>
            <path d="M3 10.500c0-2-2.500-3-2.500-6C.5 2 2.500.5 5 .5S9.500 2 9.500 4.500c0 3-2.500 4-2.500 6zM3 12.500h4M3.500 14.500h3" stroke="#a8bbd9" />
          </Svg>
          <input
            type="text"
            aria-label="操作说明搜索"
            placeholder="告诉我您想要做什么..."
            className="w-[160px] bg-transparent outline-none placeholder:text-[#a3b7d6]"
          />
        </label>
        <button type="button" className="mr-[10px] ml-auto h-[26px] pb-[2px]">登录</button>
        <button type="button" className="mb-px flex h-[25px] w-[68px] items-center gap-1 bg-[#124078] pb-1 pl-[7px]">
          <Svg w={15} h={16} className="mt-1">
            <circle cx="7.500" cy="5" r="4.200" stroke="#fff" strokeWidth="1.400" />
            <path d="M.7 15.500c0-4 2.500-6 5-6.500M9.500 8.800l1.500 1M11.500 10v5.500M8.500 12.700h6" stroke="#fff" strokeWidth="1.400" />
          </Svg>
          共享
        </button>
      </header>

      <div className="flex h-[95px] shrink-0 border-b border-[#d2d2d2] bg-[#f1f1f1]">
        <Group name="文件传输" className="w-[52px] pr-[2px]">
          <BigButton icon={wechatIcon} lines={['发送', '到微信']} />
        </Group>
        <GroupRule />
        <Group name="剪贴板" launcher className="w-[72px]"><ClipboardGroup /></Group>
        <GroupRule />
        <Group name="字体" launcher className="w-[307px]"><FontGroup /></Group>
        <GroupRule />
        <Group name="段落" launcher className="w-[266px]"><ParagraphGroup /></Group>
        <GroupRule />
        <Group name="样式" launcher className="w-[388px]"><StylesGroup /></Group>
        <GroupRule />
        <Group name="编辑" className="w-[75px]"><EditGroup /></Group>
        <GroupRule />
        <Group name="翻译" className="w-[50px]"><BigButton icon={fullTextIcon} lines={['全文', '翻译']} /></Group>
        <GroupRule />
        <Group name="论文" className="w-[50px]"><BigButton icon={paperIcon} lines={['论文', '查重']} /></Group>
        <GroupRule />
        <Group name="有道翻译" className="w-[61px]"><BigButton icon={youdaoIcon} lines={['打开', '有道翻译']} /></Group>
        <GroupRule />
        <button type="button" aria-label="折叠功能区" className="mr-[9px] mb-[5px] ml-auto self-end">
          <Svg w={9} h={6}><path d="M1 5l3.500-3.500L8 5" strokeWidth="1.800" /></Svg>
        </button>
      </div>

      <QuickBar />

      <div className="grid h-[30px] shrink-0 grid-cols-[23px_1fr] pr-3">
        <button type="button" aria-label="制表符" className="flex h-[27px] w-[26px] items-center justify-center border-[3px] border-l-2 border-[#d6d6d6] bg-[#fdfdfd]">
          <Svg w={8} h={8}><path d="M1 0v7h7" strokeWidth="2" /></Svg>
        </button>
        <div className="pt-[5px]"><HorizontalRuler /></div>
      </div>

      <main className="grid min-h-0 flex-1 grid-cols-[23px_1fr] grid-rows-[minmax(0,1fr)] pr-3">
        <VerticalRuler />
        <Page />
      </main>

      <StatusBar />
      <Watermark />
      <Annotations />
    </div>
  );
}
